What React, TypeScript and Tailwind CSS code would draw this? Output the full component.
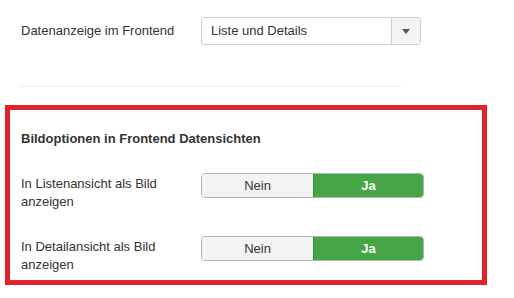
import React from "react";

const rows = [
  { label: "In Listenansicht als Bild anzeigen", value: true },
  { label: "In Detailansicht als Bild anzeigen", value: true },
];

function Toggle({ on }: { on: boolean }) {
  return (
    <div className="flex h-[25px] w-[223px] rounded-[4px] border border-[#b3b3b3] overflow-hidden text-[13px]">
      <div
        className={`flex w-[111px] items-center justify-center ${
          on ? "bg-[#f3f3f3] text-[#333]" : "bg-[#bd362f] text-white font-bold"
        }`}
      >
        Nein
      </div>
      <div
        className={`flex flex-1 items-center justify-center border-l ${
          on ? "bg-[#46a546] border-[#3a8f3a] text-white font-bold" : "bg-[#f3f3f3] border-[#b3b3b3] text-[#333]"
        }`}
      >
        Ja
      </div>
    </div>
  );
}

export default function App() {
  return (
    <div className="w-[514px] h-[298px] bg-white text-[13px] leading-[18px] text-[#333] font-['Liberation_Sans',Arial,sans-serif]">
      {/* Datenanzeige */}
      <div className="px-[21px] pt-[17px]">
        <div className="flex items-center">
          <div className="w-[180px]">Datenanzeige im Frontend</div>
          <div className="flex h-[28px] w-[220px] rounded-[3px] border border-[#ccc] overflow-hidden">
            <div className="flex flex-1 items-center pl-[9px]">Liste und Details</div>
            <div className="flex w-[29px] items-center justify-center border-l border-[#ccc] bg-[#f4f4f4]">
              <svg width="8" height="5" viewBox="0 0 8 5">
                <path d="M0 0h8L4 5z" fill="#555" />
              </svg>
            </div>
          </div>
        </div>
        <div className="mt-[41px] h-px w-[380px] bg-[#eee]" />
      </div>

      {/* Bildoptionen */}
      <div className="ml-[5px] mt-[18px] h-[180px] w-[482px] border-[5px] border-[#e3212a] px-[11px] pt-[20px]">
        <div className="font-bold">Bildoptionen in Frontend Datensichten</div>
        {rows.map((r, i) => (
          <div key={r.label} className={`flex ${i === 0 ? "mt-[25px]" : "mt-[25px]"}`}>
            <div className="w-[180px] pr-[36px] pt-[2px]">{r.label}</div>
            <Toggle on={r.value} />
          </div>
        ))}
      </div>
    </div>
  );
}
